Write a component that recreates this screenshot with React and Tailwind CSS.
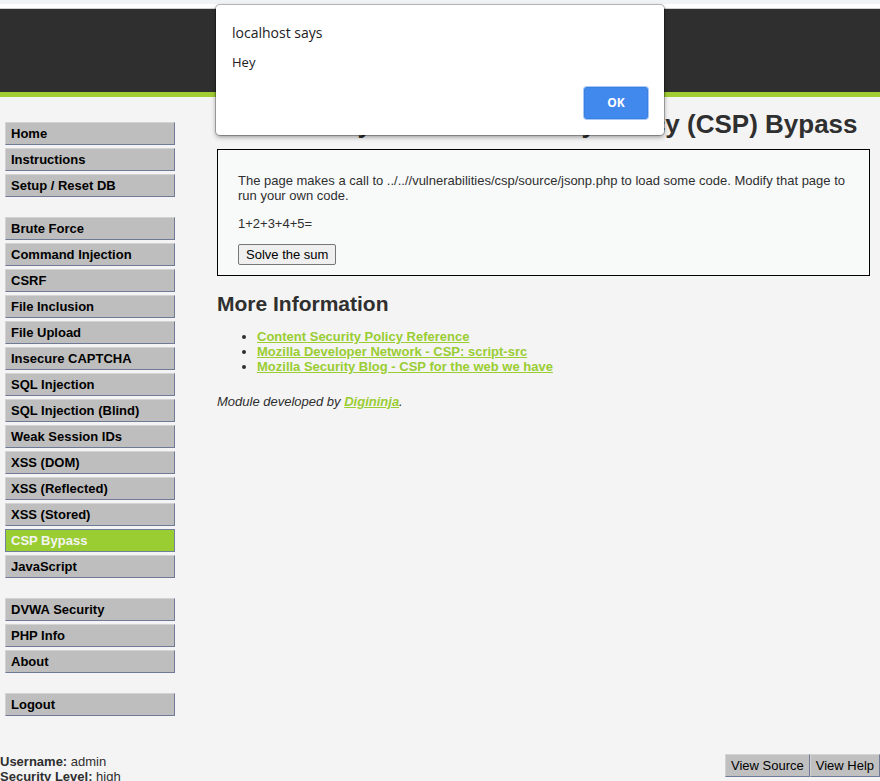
const menuGroups = [
  ["Home", "Instructions", "Setup / Reset DB"],
  [
    "Brute Force",
    "Command Injection",
    "CSRF",
    "File Inclusion",
    "File Upload",
    "Insecure CAPTCHA",
    "SQL Injection",
    "SQL Injection (Blind)",
    "Weak Session IDs",
    "XSS (DOM)",
    "XSS (Reflected)",
    "XSS (Stored)",
    "CSP Bypass",
    "JavaScript",
  ],
  ["DVWA Security", "PHP Info", "About"],
  ["Logout"],
];

const references = [
  "Content Security Policy Reference",
  "Mozilla Developer Network - CSP: script-src",
  "Mozilla Security Blog - CSP for the web we have",
];

const linkClass = "font-bold text-[#9acd32] underline";

function MenuItem({ label, active }) {
  const tone = active
    ? "border-[#6f7f9c] bg-[#9acd32] text-[#f4f4f4]"
    : "border-t-[#d3d3d3] border-l-[#d3d3d3] border-r-[#6f7b96] border-b-[#6f7b96] bg-[#bebebe] text-black";
  return (
    <li>
      <a href="#" className={`block h-[23px] border px-[5px] leading-[21px] font-bold ${tone}`}>
        {label}
      </a>
    </li>
  );
}

function Sidebar() {
  return (
    <nav className="flex w-[170px] shrink-0 flex-col gap-5">
      {menuGroups.map((group) => (
        <ul key={group[0]} className="flex flex-col gap-[3px]">
          {group.map((label) => (
            <MenuItem key={label} label={label} active={label === "CSP Bypass"} />
          ))}
        </ul>
      ))}
    </nav>
  );
}

function AlertDialog() {
  return (
    <div
      role="alertdialog"
      aria-labelledby="alert-title"
      aria-describedby="alert-text"
      className="absolute top-[5px] left-1/2 flex h-[130px] w-[448px] -translate-x-1/2 flex-col rounded-[4px] bg-white p-4 font-['Open_Sans','Noto_Sans',sans-serif] text-[#202124] shadow-[0_0_0_1px_rgba(0,0,0,0.25),0_2px_5px_rgba(0,0,0,0.4)]"
    >
      <h2 id="alert-title" className="pt-[2px] text-[14px] leading-5">
        localhost says
      </h2>
      <p id="alert-text" className="pt-[10px] text-[13px] leading-[18px]">
        Hey
      </p>
      <button
        type="button"
        className="mt-auto h-8 w-16 self-end rounded-[3px] border border-[#3a80e0] bg-[#4189ec] text-[12px] leading-4 font-bold text-white ring-1 ring-[#a8c8f8]"
      >
        OK
      </button>
    </div>
  );
}

export default function App() {
  return (
    <div className="relative min-h-screen bg-[#f4f4f4] font-['Liberation_Sans',Arial,sans-serif] text-[13px] leading-[15px] text-[#2f2f2f]">
      <div className="h-2 border-t-4 border-[#f1f3f4] bg-white" />
      <header className="h-[89px] border-t border-b-5 border-t-[#d0d0d0] border-b-[#a1cc33] bg-[#2f2f2f]" />

      <div className="flex gap-[42px] pt-[25px] pr-[10px] pl-[5px]">
        <Sidebar />
        <main className="-mt-[13px] min-w-0 flex-1">
          <h1 className="text-[26px] leading-[30px] font-bold">
            Vulnerability: Content Security Policy (CSP) Bypass
          </h1>
          <div className="mt-[10px] border border-black bg-[#f8fafa] px-5 pt-[23px] pb-[10px]">
            <p>
              The page makes a call to ../..//vulnerabilities/csp/source/jsonp.php to load some code. Modify that page to
              run your own code.
            </p>
            <p className="mt-[13px]">1+2+3+4+5=</p>
            <button
              type="button"
              className="mt-[13px] block h-[21px] rounded-[2px] border border-[#767676] bg-[#efefef] px-[7px] text-black"
            >
              Solve the sum
            </button>
          </div>
          <h2 className="mt-4 text-[21px] leading-6 font-bold">More Information</h2>
          <ul className="mt-[13px] list-disc pl-10">
            {references.map((text) => (
              <li key={text}>
                <a href="#" className={linkClass}>
                  {text}
                </a>
              </li>
            ))}
          </ul>
          <p className="mt-5 italic">
            Module developed by{" "}
            <a href="#" className={linkClass}>
              Digininja
            </a>
            .
          </p>
        </main>
      </div>

      <footer className="mt-[38px] flex items-start justify-between">
        <p>
          <b>Username:</b> admin
          <br />
          <b>Security Level:</b> high
        </p>
        <div className="flex">
          {["View Source", "View Help"].map((label) => (
            <button
              key={label}
              type="button"
              className="h-[23px] border border-t-[#d3d3d3] border-r-[#6f7b96] border-b-[#6f7b96] border-l-[#d3d3d3] bg-[#c0c0c0] px-[5px] text-black"
            >
              {label}
            </button>
          ))}
        </div>
      </footer>

      <AlertDialog />
    </div>
  );
}
